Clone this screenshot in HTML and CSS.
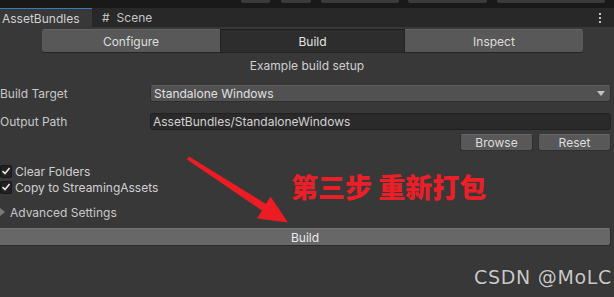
FILE: index.html
```html
<!DOCTYPE html>
<html>
<head>
<meta charset="utf-8">
<link rel="stylesheet" href="styles.css">
</head>
<body>
<div class="window">
  <div class="topstrip">
    <span class="tb b1"></span><span class="tb b2"></span><span class="tb b3"></span><span class="tb b4"></span><span class="tb b5"></span>
  </div>
  <div class="tabbar">
    <div class="tab active">AssetBundles</div>
    <div class="tab"><span class="hash">#</span>Scene</div>
    <div class="spacer"></div>
    <div class="kebab"><i></i><i></i><i></i></div>
  </div>
  <div class="content">
    <div class="toolbar">
      <div class="tbtn">Configure</div>
      <div class="tbtn sel">Build</div>
      <div class="tbtn">Inspect</div>
    </div>
    <div class="title">Example build setup</div>
    <div class="row r1">
      <div class="label">Build Target</div>
      <div class="dropdown">Standalone Windows<span class="caret"></span></div>
    </div>
    <div class="row r2">
      <div class="label">Output Path</div>
      <div class="field">AssetBundles/StandaloneWindows</div>
    </div>
    <div class="btnrow">
      <div class="btn browse">Browse</div>
      <div class="btn reset">Reset</div>
    </div>
    <div class="check c1"><span class="box"><svg width="10" height="10" viewBox="0 0 10 10"><path d="M1.5 5.2 L4 7.6 L8.6 2" fill="none" stroke="#e6e6e6" stroke-width="1.6"/></svg></span>Clear Folders</div>
    <div class="check c2"><span class="box"><svg width="10" height="10" viewBox="0 0 10 10"><path d="M1.5 5.2 L4 7.6 L8.6 2" fill="none" stroke="#e6e6e6" stroke-width="1.6"/></svg></span>Copy to StreamingAssets</div>
    <div class="foldout"><span class="tri"></span>Advanced Settings</div>
    <div class="buildbtn">Build</div>
  </div>
  <div class="annot">第三步 重新打包</div>
  <svg class="arrow" width="614" height="297" viewBox="0 0 614 297">
    <polygon points="189,156.6 187,159.4 262,210.5 257,218.5 288,222.5 270.5,196.5 266,204" fill="#ec1c24"/>
  </svg>
  <div class="watermark">CSDN @MoLC</div>
</div>
</body>
</html>
```
FILE: styles.css
```css
html, body {
  margin: 0;
  padding: 0;
  background: #383838;
}
.window {
  position: relative;
  width: 614px;
  height: 297px;
  overflow: hidden;
  font-family: Inter, "Noto Sans", sans-serif;
  font-size: 12px;
  color: #c8c8c8;
  background: #383838;
}
.topstrip {
  height: 8px;
  background: #191919;
  display: flex;
  align-items: flex-start;
}
.tb {
  display: block;
  height: 3px;
  background: #3a3a3a;
  border-radius: 0 0 2px 2px;
}
.b1 { margin-left: 241px; width: 29px; }
.b2 { margin-left: 11px; width: 30px; }
.b3 { margin-left: 10px; width: 78px; }
.b4 { margin-left: 9px; width: 79px; }
.b5 { margin-left: 10px; width: 108px; }
.tabbar {
  height: 19px;
  background: #282828;
  display: flex;
  align-items: stretch;
}
.tab {
  display: flex;
  align-items: center;
  font-size: 12px;
  color: #c4c4c4;
  padding: 0 10px;
}
.tab.active {
  width: 92px;
  box-sizing: border-box;
  padding: 0 0 0 2px;
  background: #383838;
  border-top: 1px solid #3a79bb;
  color: #d2d2d2;
}
.hash {
  margin-right: 7px;
  font-size: 12px;
}
.spacer { flex: 1; }
.kebab {
  width: 14px;
  display: flex;
  flex-direction: column;
  align-items: center;
  justify-content: center;
  gap: 2px;
  margin-right: 7px;
}
.kebab i {
  display: block;
  width: 2px;
  height: 2px;
  background: #c4c4c4;
}
.content {
  padding-top: 2px;
}
.toolbar {
  margin-left: 42px;
  width: 541px;
  height: 23px;
  display: flex;
  border-radius: 3px;
  overflow: hidden;
  box-shadow: 0 1px 0 #242424;
}
.tbtn {
  flex: 178 0 0;
  background: #585858;
  color: #dedede;
  display: flex;
  align-items: center;
  justify-content: center;
  font-size: 12px;
  border-top: 1px solid #646464;
}
.tbtn.sel {
  flex: 183 0 0;
  background: #2d2d2d;
  border-top: 1px solid #1e1e1e;
  border-left: 1px solid #232323;
  border-right: 1px solid #232323;
  color: #e4e4e4;
}
.title {
  text-align: center;
  margin-top: 6px;
  height: 15px;
  line-height: 15px;
  color: #d0d0d0;
}
.row {
  display: flex;
  align-items: center;
  height: 17px;
}
.r1 { margin-top: 12px; }
.r2 { margin-top: 11px; }
.label {
  width: 150px;
  color: #c8c8c8;
}
.dropdown {
  flex: 0 0 461px;
  height: 17px;
  box-sizing: border-box;
  background: #515151;
  border: 1px solid #303030;
  border-top-color: #5e5e5e;
  border-radius: 3px;
  display: flex;
  align-items: center;
  padding-left: 3px;
  color: #e0e0e0;
}
.caret {
  margin-left: auto;
  margin-right: 5px;
  width: 0;
  height: 0;
  border-left: 4px solid transparent;
  border-right: 4px solid transparent;
  border-top: 5px solid #c4c4c4;
}
.field {
  flex: 0 0 461px;
  height: 17px;
  box-sizing: border-box;
  background: #2a2a2a;
  border: 1px solid #212121;
  border-radius: 3px;
  display: flex;
  align-items: center;
  padding-left: 2px;
  color: #d2d2d2;
}
.btnrow {
  display: flex;
  justify-content: flex-end;
  gap: 5px;
  margin-top: 4px;
  padding-right: 3px;
}
.btn {
  width: 73px;
  height: 17px;
  box-sizing: border-box;
  background: #585858;
  border: 1px solid #303030;
  border-top-color: #646464;
  border-radius: 3px;
  display: flex;
  align-items: center;
  justify-content: center;
  color: #dedede;
}
.check {
  display: flex;
  align-items: center;
  height: 16px;
  color: #d0d0d0;
}
.c1 { margin-top: 12px; }
.box {
  width: 12px;
  height: 13px;
  box-sizing: border-box;
  background: #222222;
  border: 1px solid #171717;
  border-radius: 2px;
  margin-right: 3px;
  display: flex;
  align-items: center;
  justify-content: center;
}
.foldout {
  display: flex;
  align-items: center;
  height: 16px;
  margin-top: 9px;
  color: #c8c8c8;
}
.tri {
  width: 0;
  height: 0;
  border-top: 4px solid transparent;
  border-bottom: 4px solid transparent;
  border-left: 5px solid #7a7a7a;
  margin-right: 5px;
}
.buildbtn {
  margin-top: 8px;
  width: 611px;
  height: 18px;
  box-sizing: border-box;
  background: #676767;
  border: 1px solid #2a2a2a;
  border-top-color: #747474;
  border-left: 0;
  border-radius: 0 3px 3px 0;
  display: flex;
  align-items: center;
  justify-content: center;
  color: #ececec;
}
.annot {
  position: absolute;
  left: 291px;
  top: 171px;
  font-family: "Noto Sans CJK SC", sans-serif;
  font-weight: 900;
  font-size: 27px;
  line-height: 32px;
  color: #ea1f28;
  white-space: nowrap;
}
.arrow {
  position: absolute;
  left: 0;
  top: 0;
}
.watermark {
  position: absolute;
  left: 474px;
  top: 264px;
  font-family: "DejaVu Sans", sans-serif;
  font-size: 19px;
  letter-spacing: 0.7px;
  line-height: 26px;
  color: #c9c9c9;
  text-shadow: 0 0 1px #222;
  white-space: nowrap;
}
```
